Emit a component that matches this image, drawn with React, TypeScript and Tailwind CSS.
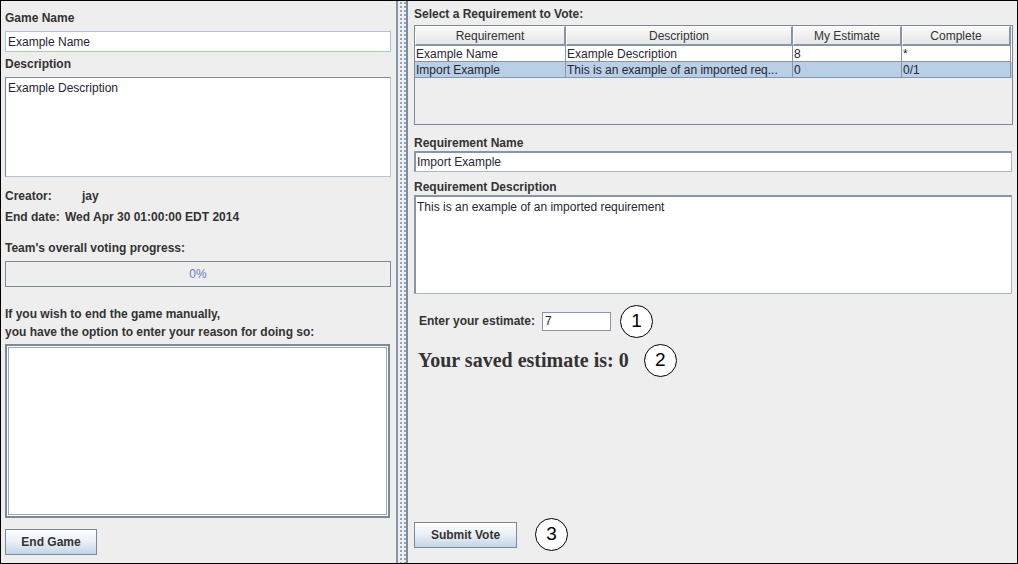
import React from "react";

const font = { fontFamily: '"Liberation Sans", Arial, sans-serif' };

function Label({ children, className = "" }: { children: React.ReactNode; className?: string }) {
  return <div className={`h-[16px] leading-[16px] text-[12px] font-bold text-[#333333] ${className}`}>{children}</div>;
}

function Circle({ n }: { n: number }) {
  return (
    <div className="w-[33px] h-[33px] rounded-full border border-black bg-white flex items-center justify-center text-[19px] text-black">
      {n}
    </div>
  );
}

function Button({ children, className = "" }: { children: React.ReactNode; className?: string }) {
  return (
    <div
      className={`h-[26px] border border-[#7a8a99] bg-gradient-to-b from-[#fdfefe] via-[#e8eff6] to-[#c3d5e7] flex items-center justify-center text-[12px] font-bold text-[#333333] ${className}`}
    >
      {children}
    </div>
  );
}

export default function App() {
  const cols = ["w-[151px]", "w-[227px]", "w-[109px]", "w-[109px]"];
  const heads = ["Requirement", "Description", "My Estimate", "Complete"];
  const rows = [
    ["Example Name", "Example Description", "8", "*"],
    ["Import Example", "This is an example of an imported req...", "0", "0/1"],
  ];
  return (
    <div style={font} className="w-[1018px] h-[564px] border border-black bg-[#eeeeee] flex overflow-hidden">
      {/* Left panel */}
      <div className="w-[395px] flex flex-col pl-[4px] pr-[4px] pt-[9px]">
        <Label>Game Name</Label>
        <div className="mt-[5px] h-[21px] w-[386px] bg-white border border-[#a9c3de] flex items-center px-[2px] text-[12px] text-[#262636]">
          Example Name
        </div>
        <Label className="mt-[4px]">Description</Label>
        <div className="mt-[5px] h-[100px] w-[386px] bg-white border border-[#7a8a99] border-r-[#b8c4d0] border-b-[#b8c4d0] px-[2px] pt-[3px] text-[12px] leading-[15px] text-[#262636]">
          Example Description
        </div>
        <div className="mt-[11px] h-[16px] leading-[16px] text-[12px] font-bold text-[#333333] flex">
          <span className="w-[77px]">Creator:</span>
          <span>jay</span>
        </div>
        <div className="mt-[5px] h-[16px] leading-[16px] text-[12px] font-bold text-[#333333] flex">
          <span className="w-[60px]">End date:</span>
          <span>Wed Apr 30 01:00:00 EDT 2014</span>
        </div>
        <Label className="mt-[15px]">Team's overall voting progress:</Label>
        <div className="mt-[5px] h-[26px] w-[386px] border border-[#7a8a99] bg-[#eeeeee] flex items-center justify-center text-[12px] text-[#6381be]">
          0%
        </div>
        <div className="mt-[18px] text-[12px] leading-[18px] font-bold text-[#333333]">
          <div>If you wish to end the game manually,</div>
          <div>you have the option to enter your reason for doing so:</div>
        </div>
        <div className="mt-[3px] h-[174px] w-[385px] border-2 border-[#7a8a99] bg-white p-[1px]">
          <div className="w-full h-full border border-[#9aa8b6] bg-white" />
        </div>
        <Button className="mt-[11px] w-[92px]">End Game</Button>
      </div>

      {/* Divider */}
      <div className="w-[12px] flex">
        <div className="w-[2px] bg-[#8796a6]" />
        <div className="w-[8px] bg-[radial-gradient(circle,#8fa6c2_0.8px,transparent_1px)] bg-[length:4px_4px] bg-[position:1px_0px]" />
        <div className="w-[2px] bg-[#7a8a99]" />
      </div>

      {/* Right panel */}
      <div className="flex-1 flex flex-col pl-[6px] pr-[3px] pt-[5px]">
        <Label>Select a Requirement to Vote:</Label>
        <div className="mt-[3px] h-[100px] w-[599px] border border-[#7a8a99] bg-[#eeeeee] text-[12px]">
          <div className="flex h-[20px]">
            {heads.map((h, i) => (
              <div
                key={h}
                className={`${cols[i]} h-[20px] pt-[1px] flex items-center justify-center border-r-2 border-b-2 border-[#8796a6] border-l border-l-white border-t border-t-white bg-gradient-to-b from-[#fafafa] to-[#e6e6e6] text-[#333333]`}
              >
                {h}
              </div>
            ))}
          </div>
          {rows.map((r, ri) => (
            <div key={ri} className={`flex h-[16px] ${ri === 1 ? "bg-[#b8cfe5]" : "bg-white"}`}>
              {r.map((c, ci) => (
                <div
                  key={ci}
                  className={`${cols[ci]} h-[16px] leading-[16px] border-r border-b border-[#8796a6] pl-[1px] text-[#262636] whitespace-nowrap overflow-hidden`}
                >
                  {c}
                </div>
              ))}
            </div>
          ))}
        </div>
        <Label className="mt-[10px]">Requirement Name</Label>
        <div className="h-[21px] w-[598px] bg-white border-2 border-[#8796a6] border-r border-b border-r-[#a9b6c4] border-b-[#a9b6c4] flex items-center px-[1px] text-[12px] text-[#262636]">
          Import Example
        </div>
        <Label className="mt-[7px]">Requirement Description</Label>
        <div className="h-[99px] w-[598px] bg-white border-2 border-[#8796a6] border-r border-b border-r-[#a9b6c4] border-b-[#a9b6c4] px-[1px] pt-[3px] text-[12px] leading-[15px] text-[#262636]">
          This is an example of an imported requirement
        </div>
        <div className="mt-[10px] flex items-center h-[34px]">
          <span className="ml-[5px] text-[12px] font-bold text-[#333333]">Enter your estimate:</span>
          <div className="ml-[7px] h-[19px] w-[69px] bg-white border border-[#8796a6] flex items-center px-[2px] text-[12px] text-[#262636]">
            7
          </div>
          <div className="ml-[9px]">
            <Circle n={1} />
          </div>
        </div>
        <div className="mt-[5px] flex items-center h-[34px]">
          <span
            style={{ fontFamily: '"Liberation Serif", "Times New Roman", serif' }}
            className="ml-[4px] text-[20px] font-bold text-[#333333]"
          >
            Your saved estimate is: 0
          </span>
          <div className="ml-[15px]">
            <Circle n={2} />
          </div>
        </div>
        <div className="flex-1" />
        <div className="mb-[12px] flex items-center">
          <Button className="w-[103px]">Submit Vote</Button>
          <div className="ml-[18px]">
            <Circle n={3} />
          </div>
        </div>
      </div>
    </div>
  );
}
